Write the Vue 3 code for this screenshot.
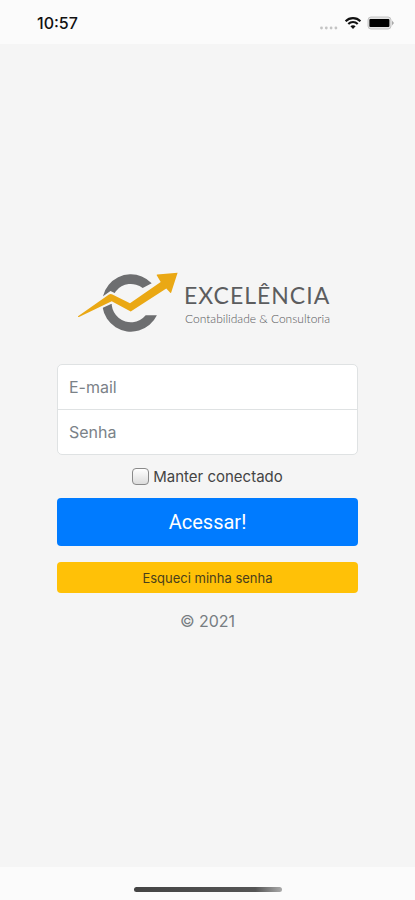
<script setup>
import { ref } from 'vue'

const email = ref('')
const password = ref('')
const remember = ref(false)
</script>

<template>
  <div class="screen">
    <header class="status">
      <span class="time">10:57</span>
      <div class="indicators">
        <svg class="dots" width="20" height="4" viewBox="0 0 20 4" aria-hidden="true">
          <circle cx="2.5" cy="2" r="1.4" /><circle cx="7.3" cy="2" r="1.4" />
          <circle cx="12.1" cy="2" r="1.4" /><circle cx="16.9" cy="2" r="1.4" />
        </svg>
        <svg class="wifi" width="18" height="14" viewBox="0 0 18 14" aria-hidden="true">
          <path d="M1.6 5.2C5.7 1.1 12.3 1.1 16.4 5.2M4.3 8C6.9 5.4 11.1 5.4 13.7 8" fill="none" stroke="#111" stroke-width="2.1" />
          <path d="M9 13 6.4 10.3C7.9 8.9 10.1 8.9 11.6 10.3Z" fill="#111" />
        </svg>
        <svg class="battery" width="28" height="14" viewBox="0 0 28 14" aria-hidden="true">
          <rect x="1" y="1" width="23" height="12" rx="3" fill="#e4e4e4" stroke="#c4c4c4" />
          <rect x="2.4" y="3" width="20" height="8" rx="1" fill="#000" />
          <path d="M25 4.6 27 7 25 9.4Z" fill="#aaa" />
        </svg>
      </div>
    </header>

    <main class="content">
      <form class="signin" @submit.prevent>
        <svg class="logo" viewBox="0 0 260 64" role="img" aria-label="Excelência Contabilidade &amp; Consultoria">
          <path fill="#6d6e70" d="M73.7 13.2A28.7 28.7 0 1 0 78.9 45.3H67.7A19.2 19.2 0 1 1 64.7 18Z" />
          <path class="halo" d="M14 37 32.7 24 52 33.3" />
          <path class="halo" d="M14 40 33.7 31 46 37.5" />
          <path fill="#eaa814" d="M0 46.3 31 24.6Q32.7 23.6 34.4 24.6L52 33.3 82.7 12 78.7 5.3Q78.4 4.6 79.2 4.5L99.6 2.8 93.2 22.4Q92.8 23.4 92 22.6L88.3 18.4 52.7 41.5 33.7 31.2 1 46.9Q-.3 47.2 0 46.3Z" />
          <text class="brand" x="106" y="34">EXCELÊNCIA</text>
          <text class="tagline" x="107" y="53">Contabilidade &amp; Consultoria</text>
        </svg>
        <div class="fields">
          <input v-model="email" type="email" placeholder="E-mail" aria-label="E-mail" />
          <input v-model="password" type="password" placeholder="Senha" aria-label="Senha" />
        </div>
        <label class="remember"><input v-model="remember" type="checkbox" />Manter conectado</label>
        <button class="primary" type="submit">Acessar!</button>
        <button class="forgot" type="button">Esqueci minha senha</button>
        <p class="copyright">© 2021</p>
      </form>
    </main>

    <footer class="home"><span class="bar"></span></footer>
  </div>
</template>

<style>
body {
  margin: 0;
  background: #f5f5f5;
}
</style>

<style scoped>
.screen {
  min-height: 100vh;
  display: flex;
  flex-direction: column;
  background: #f5f5f5;
  color: #444;
  font-family: Inter, "Liberation Sans", sans-serif;
  font-size: 16px;
}
.status {
  height: 44px;
  box-sizing: border-box;
  padding: 2px 20px 0 37px;
  display: flex;
  align-items: center;
  justify-content: space-between;
  background: #fbfbfb;
}
.time {
  font-weight: 500;
  color: #111;
}
.indicators {
  display: flex;
  align-items: center;
  gap: 5px;
}
.dots {
  fill: #c4c4c4;
  align-self: flex-end;
}
.content {
  flex: 1;
  display: flex;
  align-items: center;
  justify-content: center;
  padding: 0 57px 8px;
}
.signin {
  width: 100%;
  max-width: 330px;
  display: flex;
  flex-direction: column;
}
.logo {
  width: 260px;
  align-self: center;
  overflow: visible;
  margin-bottom: 30px;
}
.halo {
  fill: none;
  stroke: #f5f5f5;
  stroke-width: 5;
}
.brand {
  font-family: Lato, sans-serif;
  font-size: 23px;
  letter-spacing: 1px;
  fill: #5c5d5f;
}
.tagline {
  font-family: Lato, sans-serif;
  font-size: 12px;
  font-weight: 300;
  fill: #55565a;
}
.fields {
  display: flex;
  flex-direction: column;
  border: 1px solid #dfe2e3;
  border-radius: 5px;
  background: #fff;
  overflow: hidden;
}
.fields input {
  height: 44px;
  padding: 0 11px;
  border: 0;
  background: transparent;
  font: inherit;
  color: #495057;
}
.fields input + input {
  border-top: 1px solid #dfe2e3;
}
.fields input::placeholder {
  color: #7b8288;
  opacity: 1;
}
.remember {
  display: flex;
  align-items: center;
  justify-content: center;
  gap: 4px;
  height: 43px;
  font-size: 15px;
}
.remember input {
  appearance: none;
  width: 17px;
  height: 17px;
  margin: 0;
  border: 1px solid #8a8a8a;
  border-radius: 4px;
  background: linear-gradient(#fff, #dcdcdc);
}
.remember input:checked {
  background: #007bff;
}
.primary,
.forgot {
  border: 0;
  border-radius: 4px;
  font-family: inherit;
}
.primary {
  height: 48px;
  background: #007bff;
  color: #fff;
  font-family: Roboto, "Liberation Sans", sans-serif;
  font-size: 20px;
}
.forgot {
  height: 31px;
  margin-top: 16px;
  background: #ffc107;
  color: #4a3f1c;
  font-size: 13px;
}
.copyright {
  margin: 16px 0 0;
  line-height: 24px;
  text-align: center;
  color: #777d82;
}
.home {
  height: 33px;
  display: flex;
  align-items: center;
  justify-content: center;
  background: #fbfbfb;
}
.bar {
  width: 148px;
  height: 5px;
  margin-top: 12px;
  border-radius: 3px;
  background: linear-gradient(90deg, #444 0, #555 82%, #aaa 100%);
}
</style>
